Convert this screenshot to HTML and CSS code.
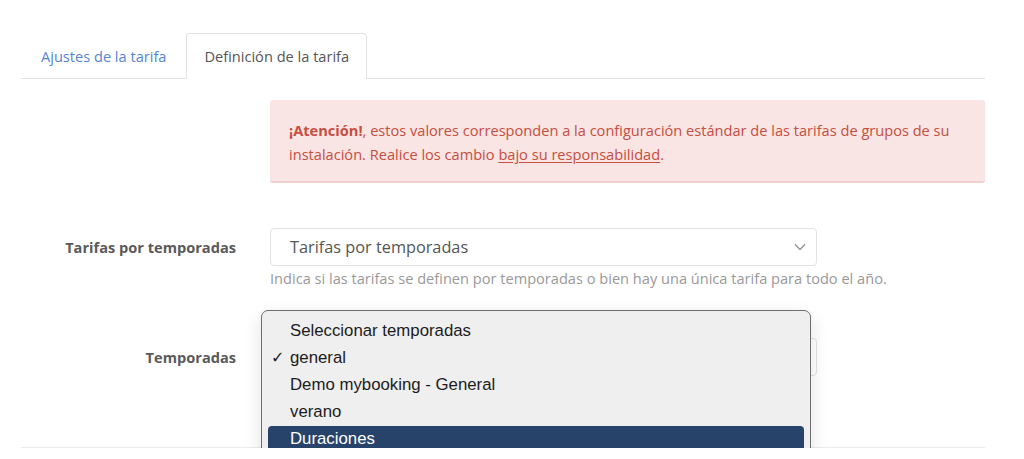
FILE: index.html
```html
<!DOCTYPE html>
<html lang="es">
<head>
    <meta charset="UTF-8">
    <meta name="viewport" content="width=device-width, initial-scale=1.0">
    <title>Definición de la tarifa</title>
    <link rel="stylesheet" href="styles.css">
</head>
<body>
    <div class="page">
        <ul class="tabs">
            <li class="tab"><a href="#">Ajustes de la tarifa</a></li>
            <li class="tab active"><a href="#">Definición de la tarifa</a></li>
        </ul>

        <div class="tab-pane">
            <div class="form-row">
                <div></div>
                <div class="alert">
                    <strong>¡Atención!</strong>, estos valores corresponden a la configuración estándar de las tarifas de grupos de su
                    instalación. Realice los cambio <u>bajo su responsabilidad</u>.
                </div>
            </div>

            <div class="form-row row-seasons">
                <label class="form-label" for="seasonRates">Tarifas por temporadas</label>
                <div class="field">
                    <div class="select" id="seasonRates">
                        <span>Tarifas por temporadas</span>
                        <svg class="chevron" width="12" height="8" viewBox="0 0 12 8"><path d="M1 1.5l5 5 5-5" fill="none" stroke="#888" stroke-width="1.2"/></svg>
                    </div>
                    <p class="help">Indica si las tarifas se definen por temporadas o bien hay una única tarifa para todo el año.</p>
                </div>
            </div>

            <div class="form-row row-list">
                <label class="form-label" for="seasons">Temporadas</label>
                <div class="field">
                    <!-- select is covered by its open picker -->
                    <div class="select" id="seasons">
                        <span></span>
                        <svg class="chevron" width="12" height="8" viewBox="0 0 12 8"><path d="M1 1.5l5 5 5-5" fill="none" stroke="#888" stroke-width="1.2"/></svg>
                    </div>
                    <ul class="picker">
                        <li>Seleccionar temporadas</li>
                        <li class="checked">general</li>
                        <li>Demo mybooking - General</li>
                        <li>verano</li>
                        <li class="hover">Duraciones</li>
                    </ul>
                </div>
            </div>
        </div>

        <div class="footer-line"></div>
    </div>
</body>
</html>
```

FILE: styles.css
```css
body {
    margin: 0;
    background: #fff;
    font-family: "Open Sans", Arial, sans-serif;
    font-size: 14.6px;
    color: #555;
}
.page {
    width: 964px;
    padding: 33px 0 0 21px;
}

/* Tabs */
.tabs {
    list-style: none;
    margin: 0;
    padding: 0;
    display: flex;
    border-bottom: 1px solid #e2e2e2;
}
.tab {
    margin-bottom: -1px;
}
.tab a {
    display: block;
    padding: 11px 19px;
    line-height: 22px;
    border: 1px solid transparent;
    border-radius: 4px 4px 0 0;
    color: #5585d4;
    text-decoration: none;
}
.tab.active a {
    padding: 11px 17px;
    color: #555;
    background: #fff;
    border-color: #e2e2e2 #e2e2e2 #fff;
}

/* Form */
.tab-pane {
    padding-top: 21px;
}
.form-row {
    display: grid;
    grid-template-columns: 249px 547px;
}
.row-seasons {
    margin-top: 45px;
}
.row-list {
    margin-top: 50px;
}
.form-label {
    text-align: right;
    padding-right: 34px;
    line-height: 38px;
    font-weight: 700;
    color: #5a5a5a;
}
.field {
    position: relative;
}
.select {
    display: flex;
    align-items: center;
    justify-content: space-between;
    height: 36px;
    padding: 0 10px 0 19px;
    border: 1px solid #e3e3e3;
    border-radius: 4px;
    font-size: 16.3px;
    color: #555;
}
.help {
    margin: 2px 0 0;
    line-height: 20px;
    color: #999;
    white-space: nowrap;
}

/* Alert */
.alert {
    width: 677px;
    padding: 18px 19px 15px;
    line-height: 24px;
    background: #f8e5e4;
    border-bottom: 2px solid #f1d1cf;
    border-radius: 3px;
    color: #c74e40;
}
.alert u {
    text-underline-offset: 2px;
}

/* Open dropdown (native picker look) */
.picker {
    position: absolute;
    left: -9px;
    top: -28px;
    width: 536px;
    margin: 0;
    padding: 6px 6px 4px;
    list-style: none;
    background: #efefef;
    border: 1px solid #6e6e6e;
    border-radius: 7px;
    box-shadow: 0 6px 18px rgba(0, 0, 0, 0.12);
    font-family: "Liberation Sans", Arial, sans-serif;
    font-size: 16.8px;
    color: #1c1c1c;
}
.picker li {
    position: relative;
    height: 27px;
    line-height: 27px;
    padding-left: 22px;
    border-radius: 4px;
}
.picker li.checked:before {
    content: '\2713';
    position: absolute;
    left: 3px;
    font-weight: 700;
    font-family: "DejaVu Sans", sans-serif;
    font-size: 16px;
}
.picker li.hover {
    height: 25px;
    line-height: 25px;
    margin-top: 1px;
    background: #27436a;
    color: #fff;
}

.footer-line {
    margin-top: 71px;
    height: 1px;
    background: #ececec;
}
```
